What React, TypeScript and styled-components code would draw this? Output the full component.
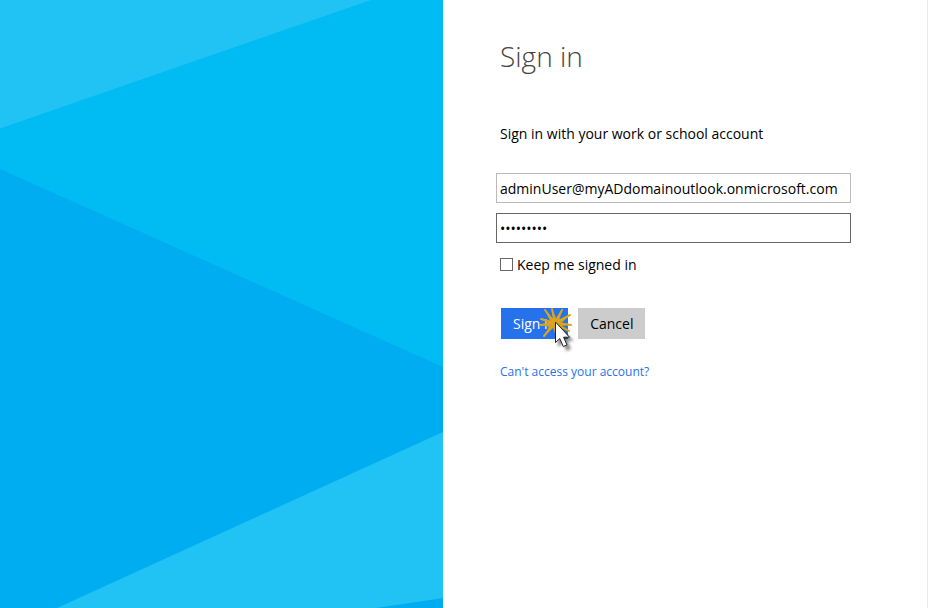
import React, { useId } from "react";
import styled, { createGlobalStyle, css } from "styled-components";

const GlobalStyle = createGlobalStyle`
  *, *::before, *::after { box-sizing: border-box; }
  body {
    margin: 0;
    background: #ffffff;
    color: #000000;
    font-family: "Open Sans", "Noto Sans", sans-serif;
    font-size: 14px;
    line-height: 20px;
  }
`;

const Page = styled.div`
  display: grid;
  grid-template-columns: 443fr 485fr;
  min-height: 100vh;
`;

const Artwork = styled.svg`
  display: block;
  width: 100%;
  height: 100%;
  min-height: 0;
  background: #00adf1;
`;

const Panel = styled.main`
  padding: 36px 76px 36px 53px;
  border-right: 1px solid #ebebeb;
`;

const Title = styled.h1`
  margin: 0 0 84px;
  padding-left: 4px;
  color: #444444;
  font-size: 28px;
  font-weight: 300;
  line-height: 40px;
`;

const Form = styled.form`
  display: flex;
  flex-direction: column;
`;

const Intro = styled.p`
  margin: -36px 0 29px;
  padding-left: 4px;
`;

const Fields = styled.div`
  display: flex;
  flex-direction: column;
  gap: 10px;
`;

const TextField = styled.input<{ $active?: boolean }>`
  width: 100%;
  height: 30px;
  padding: 1px 3px 0;
  border: 1px solid ${(p) => (p.$active ? "#666666" : "#bababa")};
  border-radius: 0;
  outline: none;
  background: #ffffff;
  color: #000000;
  font: inherit;
`;

const KeepRow = styled.div`
  display: flex;
  align-items: center;
  gap: 4px;
  margin-top: 12px;
  padding-left: 4px;
`;

const CheckBox = styled.input`
  appearance: none;
  width: 13px;
  height: 13px;
  margin: 0 0 2px;
  border: 1px solid #666666;
  background: #ffffff;

  &:checked {
    background: #2672ec;
  }
`;

const Actions = styled.div`
  display: flex;
  gap: 10px;
  margin-top: 33px;
  padding-left: 5px;
`;

const Button = styled.button<{ $primary?: boolean }>`
  position: relative;
  height: 31px;
  padding: 0 12px;
  border: 0;
  font: inherit;
  ${(p) =>
    p.$primary
      ? css`
          background: #2672ec;
          color: #ffffff;
        `
      : css`
          background: #cccccc;
          color: #000000;
        `}
`;

const Pointer = styled.svg`
  position: absolute;
  top: -2px;
  right: -8px;
  width: 40px;
  height: 50px;
  overflow: visible;
  pointer-events: none;
`;

const HelpLink = styled.a`
  align-self: flex-start;
  margin-top: 23px;
  padding-left: 4px;
  color: #2672ec;
  font-size: 12px;
  text-decoration: none;
`;

function Backdrop() {
  return (
    <Artwork viewBox="0 0 443 608" preserveAspectRatio="none" aria-hidden="true">
      <path d="M0 0H443V367L0 169Z" fill="#00bcf3" />
      <path d="M0 0H371L0 128.500Z" fill="#20c3f4" />
      <path d="M443 432V608H57Z" fill="#20c3f4" />
      <path d="M443 598V608H376Z" fill="#00adf1" />
    </Artwork>
  );
}

function ClickPointer() {
  const blurId = useId();
  return (
    <Pointer viewBox="0 0 40 50" aria-hidden="true">
      <defs>
        <filter id={blurId} x="-50%" y="-50%" width="200%" height="200%">
          <feGaussianBlur stdDeviation="1.5" />
        </filter>
      </defs>
      <path
        d="M15 17L8.500 3.500L17 13L16 2.500L20 12L26.500 3L23.500 13.500L34.500 8.500L26 16.500L36 18.500L26 20L34 25.500L23 22L20 30L17 22L7.500 30.500L13 21L4 19L13 17.500L4.500 13Z"
        fill="#c9a02c"
      />
      <path
        d="M19 17L9 4M19 17L16 3M19 17L26 4M19 17L34 9M19 17L35 19M19 17L33 25M19 17L8 30M19 17L4 19M19 17L5 13"
        stroke="#dca51c"
        strokeWidth="2"
        strokeLinecap="round"
      />
      <path
        d="M19 17V38L24 34L27.500 42L32 40L28.500 32H35Z"
        transform="translate(3 3)"
        fill="#000000"
        opacity="0.450"
        filter={`url(#${blurId})`}
      />
      <path
        d="M19.500 16V36.500L23.800 32.600L27.300 40.500L31 38.900L27.600 31.200H33.500Z"
        fill="#ffffff"
        stroke="#222222"
        strokeLinejoin="round"
      />
    </Pointer>
  );
}

export default function App() {
  return (
    <>
      <GlobalStyle />
      <Page>
        <Backdrop />
        <Panel>
          <Title>Sign in</Title>
          <Form onSubmit={(e) => e.preventDefault()}>
            <Intro>Sign in with your work or school account</Intro>
            <Fields>
              <TextField
                type="email"
                aria-label="Email"
                defaultValue="adminUser@myADdomainoutlook.onmicrosoft.com"
              />
              <TextField $active type="password" aria-label="Password" defaultValue="password1" />
            </Fields>
            <KeepRow>
              <CheckBox type="checkbox" id="keep" />
              <label htmlFor="keep">Keep me signed in</label>
            </KeepRow>
            <Actions>
              <Button $primary type="submit">
                Sign in
                <ClickPointer />
              </Button>
              <Button type="button">Cancel</Button>
            </Actions>
            <HelpLink href="#recover">Can't access your account?</HelpLink>
          </Form>
        </Panel>
      </Page>
    </>
  );
}
